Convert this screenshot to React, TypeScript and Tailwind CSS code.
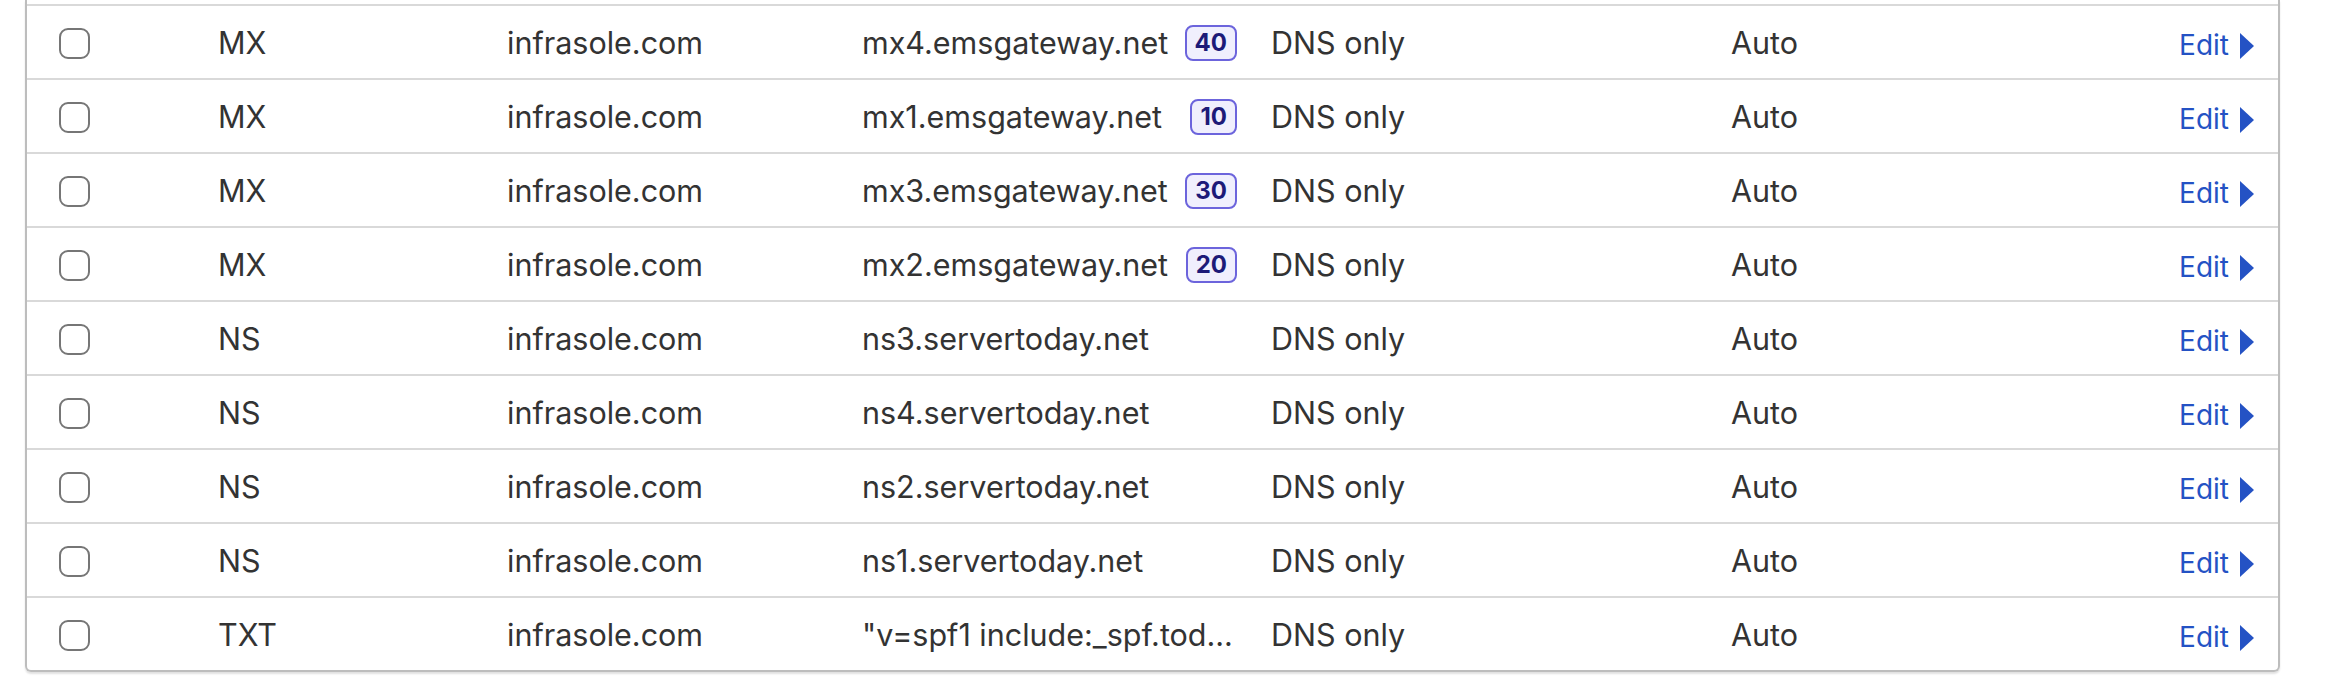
import React from "react";

type DnsRecord = {
    type: string;
    name: string;
    content: string;
    priority?: number;
};

const records: DnsRecord[] = [
    { type: "MX", name: "infrasole.com", content: "mx4.emsgateway.net", priority: 40 },
    { type: "MX", name: "infrasole.com", content: "mx1.emsgateway.net", priority: 10 },
    { type: "MX", name: "infrasole.com", content: "mx3.emsgateway.net", priority: 30 },
    { type: "MX", name: "infrasole.com", content: "mx2.emsgateway.net", priority: 20 },
    { type: "NS", name: "infrasole.com", content: "ns3.servertoday.net" },
    { type: "NS", name: "infrasole.com", content: "ns4.servertoday.net" },
    { type: "NS", name: "infrasole.com", content: "ns2.servertoday.net" },
    { type: "NS", name: "infrasole.com", content: "ns1.servertoday.net" },
    { type: "TXT", name: "infrasole.com", content: "\"v=spf1 include:_spf.tod..." },
];

const RecordRow: React.FC<{ record: DnsRecord }> = ({ record }) => {
    return (
        <div className="grid h-[74px] grid-cols-[159px_289px_355px_375px_34px_460px_1fr] items-center border-t-2 border-[#d9d9d9] pl-[32px] pr-[24px] pt-[2px]">
            {/* checkbox */}
            <div>
                <span className="block h-[31px] w-[31px] rounded-[9px] border-2 border-[#767676] bg-white" />
            </div>
            <div>{record.type}</div>
            <div>{record.name}</div>

            {/* content + priority badge */}
            <div className="flex items-center justify-between gap-3 whitespace-nowrap">
                <span>{record.content}</span>
                {record.priority !== undefined && (
                    <span className="flex h-[36px] shrink-0 items-center rounded-[8px] border-2 border-[#6c64dc] bg-[#f0effd] px-[8px] text-[24px] font-bold text-[#1d1a78]">
                        {record.priority}
                    </span>
                )}
            </div>
            <div />
            <div>DNS only</div>

            <div className="flex items-center justify-between">
                <span>Auto</span>
                <button className="mt-[3px] flex items-center gap-[11px] text-[28px] text-[#2452c4]">
                    Edit
                    <svg width="14" height="26" viewBox="0 0 14 26" className="mt-[2px]">
                        <polygon points="0,0 14,13 0,26" fill="#2452c4" />
                    </svg>
                </button>
            </div>
        </div>
    );
};

export default function App() {
    return (
        <div className="h-[692px] w-[2340px] bg-white pl-[25px] font-['Inter','Noto_Sans',sans-serif] text-[30.5px] text-[#333333]">
            <div className="w-[2255px] rounded-b-[6px] border-x-2 border-b-2 border-[#bdbdbd] pt-[4px] shadow-[0_2px_2px_rgba(0,0,0,0.12)]">
                {records.map((r, i) => (
                    <RecordRow key={i} record={r} />
                ))}
            </div>
        </div>
    );
}
